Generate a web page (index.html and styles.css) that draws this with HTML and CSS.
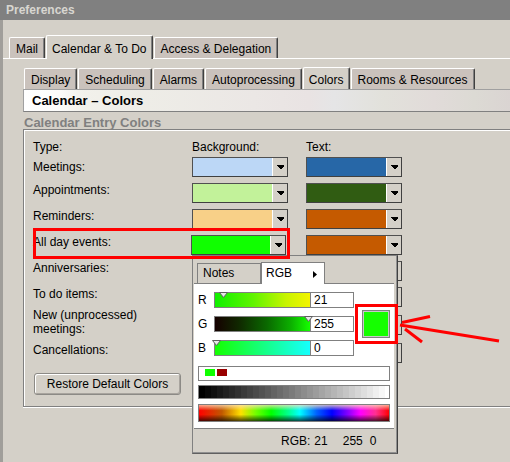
FILE: index.html
```html
<!DOCTYPE html>
<html>
<head>
<meta charset="utf-8">
<title>Preferences</title>
<link rel="stylesheet" href="styles.css">
</head>
<body>
<div class="titlebar">Preferences</div>
<div class="frame">
  <div class="tabs">
    <div class="tab">Mail</div>
    <div class="tab sel">Calendar &amp; To Do</div>
    <div class="tab">Access &amp; Delegation</div>
  </div>
  <div class="panel">
    <div class="subtabs">
      <div class="tab">Display</div>
      <div class="tab">Scheduling</div>
      <div class="tab">Alarms</div>
      <div class="tab">Autoprocessing</div>
      <div class="tab sel">Colors</div>
      <div class="tab">Rooms &amp; Resources</div>
    </div>
    <div class="header">Calendar – Colors</div>
    <div class="glabel">Calendar Entry Colors</div>
    <div class="group">
      <div class="row head"><span class="lbl">Type:</span><span class="col">Background:</span><span class="col">Text:</span></div>
      <div class="row first">
        <span class="lbl">Meetings:</span>
        <div class="combo"><div class="fill c-meet-bg"></div><div class="btn"><svg width="7" height="4" viewBox="0 0 7 4"><path d="M0 0H7V1L4 4H3L0 1Z"/></svg></div></div>
        <div class="combo"><div class="fill c-meet-tx"></div><div class="btn"><svg width="7" height="4" viewBox="0 0 7 4"><path d="M0 0H7V1L4 4H3L0 1Z"/></svg></div></div>
      </div>
      <div class="row">
        <span class="lbl">Appointments:</span>
        <div class="combo"><div class="fill c-appt-bg"></div><div class="btn"><svg width="7" height="4" viewBox="0 0 7 4"><path d="M0 0H7V1L4 4H3L0 1Z"/></svg></div></div>
        <div class="combo"><div class="fill c-appt-tx"></div><div class="btn"><svg width="7" height="4" viewBox="0 0 7 4"><path d="M0 0H7V1L4 4H3L0 1Z"/></svg></div></div>
      </div>
      <div class="row">
        <span class="lbl">Reminders:</span>
        <div class="combo"><div class="fill c-rem-bg"></div><div class="btn"><svg width="7" height="4" viewBox="0 0 7 4"><path d="M0 0H7V1L4 4H3L0 1Z"/></svg></div></div>
        <div class="combo"><div class="fill c-rem-tx"></div><div class="btn"><svg width="7" height="4" viewBox="0 0 7 4"><path d="M0 0H7V1L4 4H3L0 1Z"/></svg></div></div>
      </div>
      <div class="row">
        <span class="lbl">All day events:</span>
        <div class="combo narrow"><div class="fill c-all-bg"></div><div class="btn"><svg width="7" height="4" viewBox="0 0 7 4"><path d="M0 0H7V1L4 4H3L0 1Z"/></svg></div></div>
        <div class="combo"><div class="fill c-all-tx"></div><div class="btn"><svg width="7" height="4" viewBox="0 0 7 4"><path d="M0 0H7V1L4 4H3L0 1Z"/></svg></div></div>
      </div>
      <div class="row">
        <span class="lbl">Anniversaries:</span>
        <div class="combo"><div class="fill c-white"></div><div class="btn"><svg width="7" height="4" viewBox="0 0 7 4"><path d="M0 0H7V1L4 4H3L0 1Z"/></svg></div></div>
        <div class="combo"><div class="fill c-white"></div><div class="btn"><svg width="7" height="4" viewBox="0 0 7 4"><path d="M0 0H7V1L4 4H3L0 1Z"/></svg></div></div>
      </div>
      <div class="row more">
        <span class="lbl">To do items:</span>
        <div class="combo"><div class="fill c-white"></div><div class="btn"><svg width="7" height="4" viewBox="0 0 7 4"><path d="M0 0H7V1L4 4H3L0 1Z"/></svg></div></div>
        <div class="combo"><div class="fill c-white"></div><div class="btn"><svg width="7" height="4" viewBox="0 0 7 4"><path d="M0 0H7V1L4 4H3L0 1Z"/></svg></div></div>
      </div>
      <div class="row more">
        <span class="lbl two">New (unprocessed)<br>meetings:</span>
        <div class="combo"><div class="fill c-white"></div><div class="btn"><svg width="7" height="4" viewBox="0 0 7 4"><path d="M0 0H7V1L4 4H3L0 1Z"/></svg></div></div>
        <div class="combo"><div class="fill c-white"></div><div class="btn"><svg width="7" height="4" viewBox="0 0 7 4"><path d="M0 0H7V1L4 4H3L0 1Z"/></svg></div></div>
      </div>
      <div class="row last">
        <span class="lbl">Cancellations:</span>
        <div class="combo"><div class="fill c-white"></div><div class="btn"><svg width="7" height="4" viewBox="0 0 7 4"><path d="M0 0H7V1L4 4H3L0 1Z"/></svg></div></div>
        <div class="combo"><div class="fill c-white"></div><div class="btn"><svg width="7" height="4" viewBox="0 0 7 4"><path d="M0 0H7V1L4 4H3L0 1Z"/></svg></div></div>
      </div>
      <button class="restore">Restore Default Colors</button>
    </div>
  </div>
</div>

<div class="redbox"></div>

<div class="popup">
  <div class="ptabs">
    <div class="ptab">Notes</div>
    <div class="ptab on"><span>RGB</span><svg width="4" height="7" viewBox="0 0 4 7"><path d="M0 0L4 3.5L0 7Z"/></svg></div>
  </div>
  <div class="pbody">
    <div class="sliders">
      <div class="srows">
        <div class="srow">
          <span class="slab">R</span>
          <div class="slider s-r"><svg class="mark m-r" width="9" height="6" viewBox="0 0 9 6"><path d="M0.5 0.5H8.5L4.5 5.5Z"/></svg></div>
          <div class="val">21</div>
        </div>
        <div class="srow">
          <span class="slab">G</span>
          <div class="slider s-g"><svg class="mark m-g" width="9" height="6" viewBox="0 0 9 6"><path d="M0.5 0.5H8.5L4.5 5.5Z"/></svg></div>
          <div class="val">255</div>
        </div>
        <div class="srow">
          <span class="slab">B</span>
          <div class="slider s-b"><svg class="mark m-b" width="9" height="6" viewBox="0 0 9 6"><path d="M0.5 0.5H8.5L4.5 5.5Z"/></svg></div>
          <div class="val">0</div>
        </div>
      </div>
      <div class="swatch"></div>
    </div>
    <div class="recent"><span class="rc rc-green"></span><span class="rc rc-red"></span></div>
    <div class="grays"></div>
    <div class="spectrum"></div>
  </div>
  <div class="pfoot"><span>RGB:</span><span class="v1">21</span><span class="v2">255</span><span class="v3">0</span></div>
  <div class="redbox2"></div>
</div>

<svg class="arrow" width="510" height="462" viewBox="0 0 510 462">
  <path d="M402 322.5L430 316.5" />
  <path d="M400 325L499 341" />
  <path d="M405 329L422 342" />
</svg>
</body>
</html>
```

FILE: styles.css
```css
html, body {
  margin: 0;
  padding: 0;
}
body {
  width: 510px;
  height: 462px;
  overflow: hidden;
  position: relative;
  background: #d4d0c8;
  font-family: "Liberation Sans", Arial, sans-serif;
  font-size: 12px;
  line-height: 14px;
  color: #000;
}
.titlebar {
  height: 20px;
  background: #808080;
  color: #d8d6d0;
  font-weight: bold;
  line-height: 20px;
  padding-left: 6px;
}
.frame {
  border-left: 3px solid #a09e9a;
  height: 442px;
  box-sizing: border-box;
}
.tabs {
  display: flex;
  align-items: flex-end;
  height: 38px;
  box-sizing: border-box;
  padding: 15px 0 0 6px;
}
.tab {
  height: 21px;
  box-sizing: border-box;
  padding: 4px 6px 0;
  background: #cac2bc;
  border-top: 1px solid #fff;
  border-left: 1px solid #fff;
  border-right: 1px solid #404040;
  box-shadow: inset -1px 0 #808080;
  border-radius: 2px 2px 0 0;
  margin-right: 1px;
  white-space: nowrap;
}
.tab.sel {
  background: #d4d0c8;
  padding: 6px 5px 0;
  position: relative;
  z-index: 1;
}
.tabs .tab.sel {
  height: 24px;
  margin-bottom: -1px;
}
.subtabs .tab.sel {
  height: 22px;
  padding-top: 5px;
}
.panel {
  border-top: 1px solid #fff;
  padding-left: 20px;
}
.subtabs {
  display: flex;
  align-items: flex-end;
  height: 30px;
  box-sizing: border-box;
  padding: 8px 0 0 1px;
}
.header {
  height: 23px;
  box-sizing: border-box;
  border-top: 1px solid #a0a0a0;
  border-left: 1px solid #a0a0a0;
  border-bottom: 1px solid #808080;
  padding-left: 8px;
  font-weight: bold;
  font-size: 13px;
  line-height: 21px;
  background: linear-gradient(90deg, #ffffff 0, #fcfcfa 35px, #f2f1eb 60px, #eeede7 120px, #ebe7e5 230px, #e9e3e3 285px, #e5e5e6 310px, #e2e1db 360px, #e1dbd9 410px, #dcdad4 450px, #dad4d2 487px);
}
.glabel {
  height: 13px;
  margin-top: 4px;
  padding-left: 1px;
  font-weight: bold;
  font-size: 13px;
  line-height: 13px;
  color: #808080;
}
.group {
  display: flex;
  flex-direction: column;
  align-items: flex-start;
  border-top: 1px solid #808080;
  border-left: 1px solid #808080;
  border-bottom: 1px solid #808080;
  box-shadow: inset 1px 1px #fff, 0 1px #fff;
  padding: 10px 0 11px 9px;
}
.row {
  display: flex;
  align-items: center;
  height: 20px;
  margin-bottom: 6px;
}
.row.head {
  height: 14px;
  margin-bottom: 3px;
}
.row.more {
  margin-bottom: 8px;
}
.lbl {
  width: 159px;
  flex: none;
  margin-bottom: 6px;
  white-space: nowrap;
}
.row.head .lbl,
.row.first .lbl {
  margin-bottom: 0;
}
.col {
  width: 114px;
}
.combo {
  width: 96px;
  height: 20px;
  flex: none;
  box-sizing: border-box;
  margin-right: 18px;
  display: flex;
  border: 1px solid #404040;
  border-top-color: #505050;
  border-left-color: #505050;
}
.combo.narrow {
  width: 95px;
  margin-left: -1px;
  margin-right: 20px;
}
.fill {
  flex: 1;
}
.btn {
  width: 14px;
  flex: none;
  background: #d4d0c8;
  border-left: 1px solid #fff;
  display: flex;
  align-items: center;
  justify-content: center;
}
.btn svg {
  fill: #000;
  shape-rendering: crispEdges;
  margin-left: 1px;
}
.c-meet-bg { background: #bcd7f6; }
.c-meet-tx { background: #2767a7; }
.c-appt-bg { background: #c2f29a; }
.c-appt-tx { background: #305c12; }
.c-rem-bg { background: #f8d088; }
.c-rem-tx { background: #c55a00; }
.c-all-bg { background: #10ff00; }
.c-all-tx { background: #c55a00; }
.c-white { background: #fff; }
.restore {
  display: block;
  margin: 4px 0 0 1px;
  width: 147px;
  height: 22px;
  padding: 0;
  font-family: "Liberation Sans", Arial, sans-serif;
  font-size: 12px;
  color: #000;
  background: #d4d0c8;
  border: 1px solid #8c8a86;
  border-radius: 3px;
  box-shadow: inset 1px 1px #fff, inset -1px -1px #a8a49e;
}
.redbox {
  position: absolute;
  left: 33px;
  top: 228px;
  width: 257px;
  height: 31px;
  box-sizing: border-box;
  border: 3px solid #ff0000;
  z-index: 3;
}
.popup {
  position: absolute;
  left: 192px;
  top: 255px;
  width: 206px;
  height: 199px;
  box-sizing: border-box;
  background: #d4d0c8;
  border: 1px solid #808080;
  border-right-color: #404040;
  border-bottom-color: #606060;
  box-shadow: inset -1px -1px #909090;
  z-index: 2;
}
.ptabs {
  display: flex;
  align-items: flex-end;
  height: 27px;
  padding-left: 4px;
}
.ptab {
  width: 64px;
  height: 20px;
  box-sizing: border-box;
  border: 1px solid #808080;
  border-bottom: none;
  padding: 2px 0 0 5px;
  background: #d4d0c8;
}
.ptab.on {
  height: 22px;
  margin-bottom: -1px;
  padding: 3px 7px 0 4px;
  background: #fff;
  position: relative;
  z-index: 1;
  display: flex;
  justify-content: space-between;
  align-items: flex-start;
}
.ptab.on svg {
  margin-top: 5px;
  fill: #000;
}
.pbody {
  width: 196px;
  height: 136px;
  margin-left: 1px;
  background: #fff;
  border-top: 1px solid #808080;
  border-bottom: 1px solid #808080;
  padding: 8px 0 0 4px;
  box-sizing: content-box;
  position: relative;
}
.sliders {
  display: flex;
  height: 64px;
}
.srows {
  display: flex;
  flex-direction: column;
  gap: 8px;
}
.srow {
  display: flex;
  align-items: center;
  height: 16px;
}
.slab {
  width: 16px;
}
.slider {
  width: 97px;
  height: 16px;
  box-sizing: border-box;
  border: 1px solid #808080;
  position: relative;
}
.s-r { background: linear-gradient(90deg, #10f000 0, #60f400 40%, #c8f400 75%, #f4f400 100%); }
.s-g { background: linear-gradient(90deg, #150000 0, #102800 25%, #0a6a00 55%, #0cb000 80%, #15ff00 100%); }
.s-b { background: linear-gradient(90deg, #15ff00 0, #15ff80 50%, #15ffff 100%); }
.mark {
  position: absolute;
  top: -1px;
  fill: #e8e8e8;
  stroke: #606060;
  stroke-width: 1;
}
.m-r { left: 4px; }
.m-g { left: 89px; }
.m-b { left: -3px; }
.val {
  width: 44px;
  height: 16px;
  box-sizing: border-box;
  margin-left: -1px;
  border: 1px solid #808080;
  padding-left: 3px;
  line-height: 14px;
  background: #fff;
}
.swatch {
  width: 28px;
  height: 28px;
  box-sizing: border-box;
  margin: 18px 0 0 8px;
  background: #15ff00;
  border: 1px solid #808080;
  box-shadow: inset 0 0 0 1px #c8c8c8;
}
.recent {
  margin-top: 10px;
  width: 192px;
  height: 15px;
  box-sizing: border-box;
  border: 1px solid #808080;
  padding: 2px 0 0 6px;
  display: flex;
  gap: 2px;
}
.rc {
  width: 10px;
  height: 7px;
}
.rc-green { background: #10ff00; }
.rc-red { background: #990000; }
.grays {
  margin-top: 4px;
  width: 192px;
  height: 14px;
  box-sizing: border-box;
  border: 1px solid #808080;
  background: linear-gradient(90deg,
    #000 0 6px, #080808 6px 12px, #101010 12px 18px, #191919 18px 24px,
    #212121 24px 30px, #292929 30px 36px, #313131 36px 42px, #3a3a3a 42px 48px,
    #424242 48px 54px, #4a4a4a 54px 60px, #525252 60px 66px, #5a5a5a 66px 72px,
    #636363 72px 78px, #6b6b6b 78px 84px, #737373 84px 90px, #7b7b7b 90px 96px,
    #848484 96px 102px, #8c8c8c 102px 108px, #949494 108px 114px, #9c9c9c 114px 120px,
    #a5a5a5 120px 126px, #adadad 126px 132px, #b5b5b5 132px 138px, #bdbdbd 138px 144px,
    #c5c5c5 144px 150px, #cecece 150px 156px, #d6d6d6 156px 162px, #dedede 162px 168px,
    #e6e6e6 168px 174px, #efefef 174px 180px, #f7f7f7 180px 186px, #fff 186px 190px);
}
.spectrum {
  margin-top: 5px;
  width: 192px;
  height: 18px;
  box-sizing: border-box;
  border: 1px solid #808080;
  background:
    linear-gradient(180deg, rgba(255, 225, 190, 0.75) 0, rgba(255, 255, 255, 0) 35%, rgba(0, 0, 0, 0) 60%, rgba(0, 0, 0, 0.7) 100%),
    linear-gradient(90deg, #ff0000 0, #c05800 12%, #ffe000 22%, #70ff00 30%, #00ff00 38%, #00ff90 47%, #00ffff 53%, #0060ff 62%, #0000ff 70%, #8000ff 78%, #ff00ff 85%, #ff3090 93%, #ff0000 100%);
}
.pfoot {
  height: 24px;
  line-height: 24px;
  padding-left: 88px;
  display: flex;
}
.pfoot .v1 { margin-left: 4px; }
.pfoot .v2 { margin-left: 15px; }
.pfoot .v3 { margin-left: 7px; }
.redbox2 {
  position: absolute;
  left: 162px;
  top: 48px;
  width: 43px;
  height: 40px;
  box-sizing: border-box;
  border: 3px solid #ff0000;
}
.arrow {
  position: absolute;
  left: 0;
  top: 0;
  z-index: 4;
  pointer-events: none;
  fill: none;
  stroke: #ff0000;
  stroke-width: 3;
}
```
